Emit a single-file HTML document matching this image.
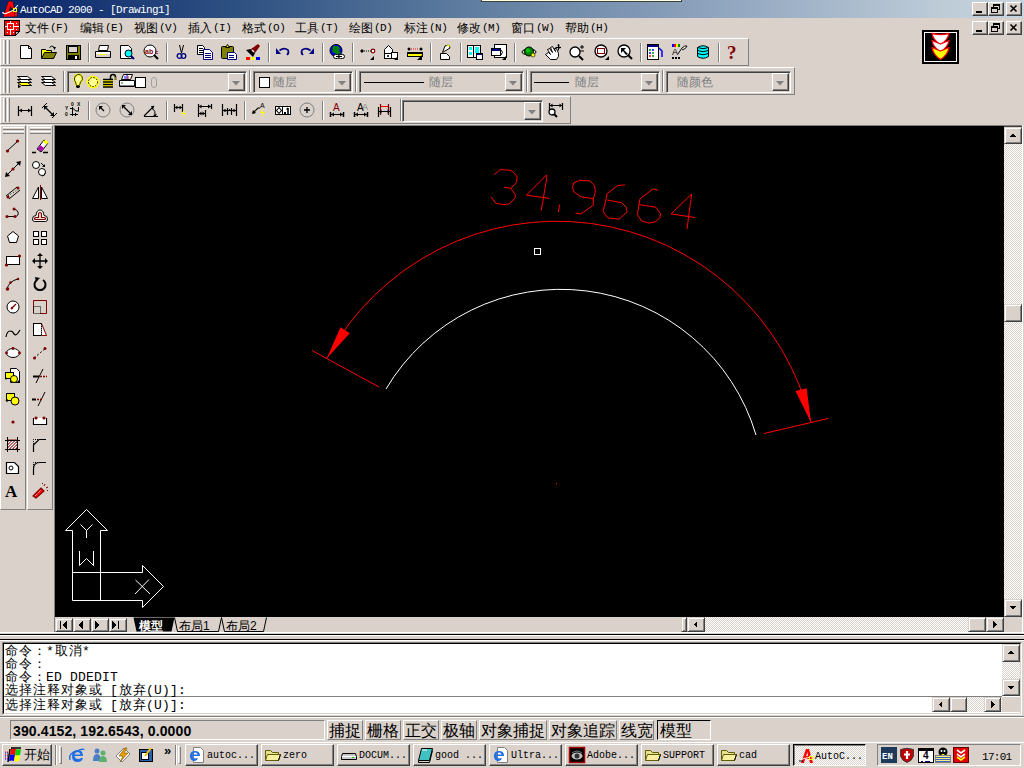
<!DOCTYPE html>
<html><head><meta charset="utf-8">
<style>
*{box-sizing:border-box}
body{margin:0;width:1024px;height:768px;overflow:hidden;background:#D9D1CA;position:relative;font-family:"Liberation Sans",sans-serif;font-size:12px;color:#000}
.a{position:absolute}
.t{position:absolute;white-space:nowrap;line-height:1}
.btn{position:absolute;background:#D9D1CA;border-top:1px solid #fff;border-left:1px solid #fff;border-right:1px solid #404040;border-bottom:1px solid #404040;box-shadow:inset -1px -1px #808080}
.sbtn{position:absolute;background:#D9D1CA;border-top:1px solid #D9D1CA;border-left:1px solid #D9D1CA;border-right:1px solid #404040;border-bottom:1px solid #404040;box-shadow:inset 1px 1px #fff,inset -1px -1px #808080}
.tb{position:absolute;border-top:1px solid #fff;border-left:1px solid #fff;border-right:1px solid #808080;border-bottom:1px solid #808080}
.chk{background-color:#fff;background-image:repeating-conic-gradient(#D9D1CA 0 25%,#fff 0 50%);background-size:2px 2px}
svg{position:absolute;overflow:visible}
</style></head><body>
<div class="a" style="left:0px;top:0px;width:1024px;height:18px;background:linear-gradient(to right,#0A246A 0px,#2D5082 235px,#5F7DA0 470px,#8FA4BE 715px,#BECCD8 945px,#C8D4DE 1024px)"></div>
<div class="a" style="left:481px;top:0px;width:201px;height:2px;background:#FFFFE1;border-left:1px solid #404040;border-right:1px solid #404040;border-bottom:1px solid #404040"></div>
<svg width="18" height="18" style="left:1px;top:0px" ><path d="M2.5,16.5 L7.5,1.5 H11.5 L13.5,9 L10.5,9 L9.5,5.5 L8,11 H11 L11.5,12 V16.5 H13.5 V12 L16,16.5" fill="#f00" stroke="#000" stroke-width="0.7"/><path d="M2.5,16.5 L7.5,1.5 H11.5 L13,8 H10 L9.5,5.5 L7.5,12 L6.5,16.5 Z" fill="#f00"/><rect x="11" y="12" width="2.5" height="4.5" fill="#f00"/><rect x="14" y="12" width="2" height="4" fill="#f00"/><path d="M1.5,12 Q2,14 5,13.5 L12,10.5 L17,5" fill="none" stroke="#fff" stroke-width="1.1"/><rect x="12.5" y="8.5" width="3" height="3" fill="none" stroke="#ff0"/></svg>
<div class="t" style="left:20px;top:5px;color:#fff;font-family:'Liberation Mono',monospace;font-size:11px;letter-spacing:-0.6px">AutoCAD 2000 - [Drawing1]</div>
<div class="btn" style="left:972px;top:2px;width:16px;height:14px;"></div>
<div class="btn" style="left:988px;top:2px;width:16px;height:14px;"></div>
<div class="btn" style="left:1006px;top:2px;width:16px;height:14px;"></div>
<svg width="16" height="14" style="left:972px;top:2px" shape-rendering="crispEdges"><rect x="4" y="9" width="6" height="2" fill="#000"/></svg>
<svg width="16" height="14" style="left:988px;top:2px" shape-rendering="crispEdges"><g fill="none" stroke="#000"><rect x="5.5" y="2.5" width="6" height="5"/><rect x="3.5" y="5.5" width="6" height="5" fill="#D9D1CA"/></g><rect x="5" y="2" width="7" height="2" fill="#000"/><rect x="3" y="5" width="7" height="2" fill="#000"/></svg>
<svg width="16" height="14" style="left:1006px;top:2px" ><path d="M4.5,3.5 L10.5,9.5 M10.5,3.5 L4.5,9.5" stroke="#000" stroke-width="1.6"/></svg>
<svg width="16" height="16" style="left:4px;top:20px" shape-rendering="crispEdges"><path d="M0.5,0.5 H15.5 V11.5 L11.5,15.5 H0.5 Z" fill="#f00" stroke="#000"/><path d="M6.5,1 V15 M1,6.5 H15" stroke="#fff"/><rect x="3.5" y="3.5" width="6" height="6" fill="#f00" stroke="#fff" stroke-width="1.3"/><rect x="6" y="6" width="1" height="1" fill="#fff"/><rect x="12" y="3" width="1" height="1" fill="#fff"/><rect x="12" y="9" width="1" height="1" fill="#fff"/><rect x="3" y="12" width="1" height="1" fill="#fff"/><rect x="9" y="12" width="1" height="1" fill="#fff"/><path d="M11.5,15.5 L15.5,11.5 H11.5 Z" fill="#c0c0c0" stroke="#000"/></svg>
<div class="t" style="left:25px;top:22px;font-size:12px">文件</div>
<div class="t" style="left:50px;top:23px;font-family:'Liberation Mono',monospace;font-size:11px;letter-spacing:-0.5px">(F)</div>
<div class="t" style="left:80px;top:22px;font-size:12px">编辑</div>
<div class="t" style="left:105px;top:23px;font-family:'Liberation Mono',monospace;font-size:11px;letter-spacing:-0.5px">(E)</div>
<div class="t" style="left:134px;top:22px;font-size:12px">视图</div>
<div class="t" style="left:159px;top:23px;font-family:'Liberation Mono',monospace;font-size:11px;letter-spacing:-0.5px">(V)</div>
<div class="t" style="left:188px;top:22px;font-size:12px">插入</div>
<div class="t" style="left:213px;top:23px;font-family:'Liberation Mono',monospace;font-size:11px;letter-spacing:-0.5px">(I)</div>
<div class="t" style="left:242px;top:22px;font-size:12px">格式</div>
<div class="t" style="left:267px;top:23px;font-family:'Liberation Mono',monospace;font-size:11px;letter-spacing:-0.5px">(O)</div>
<div class="t" style="left:295px;top:22px;font-size:12px">工具</div>
<div class="t" style="left:320px;top:23px;font-family:'Liberation Mono',monospace;font-size:11px;letter-spacing:-0.5px">(T)</div>
<div class="t" style="left:349px;top:22px;font-size:12px">绘图</div>
<div class="t" style="left:374px;top:23px;font-family:'Liberation Mono',monospace;font-size:11px;letter-spacing:-0.5px">(D)</div>
<div class="t" style="left:404px;top:22px;font-size:12px">标注</div>
<div class="t" style="left:429px;top:23px;font-family:'Liberation Mono',monospace;font-size:11px;letter-spacing:-0.5px">(N)</div>
<div class="t" style="left:457px;top:22px;font-size:12px">修改</div>
<div class="t" style="left:482px;top:23px;font-family:'Liberation Mono',monospace;font-size:11px;letter-spacing:-0.5px">(M)</div>
<div class="t" style="left:511px;top:22px;font-size:12px">窗口</div>
<div class="t" style="left:536px;top:23px;font-family:'Liberation Mono',monospace;font-size:11px;letter-spacing:-0.5px">(W)</div>
<div class="t" style="left:565px;top:22px;font-size:12px">帮助</div>
<div class="t" style="left:590px;top:23px;font-family:'Liberation Mono',monospace;font-size:11px;letter-spacing:-0.5px">(H)</div>
<div class="btn" style="left:972px;top:21px;width:16px;height:14px;"></div>
<div class="btn" style="left:988px;top:21px;width:16px;height:14px;"></div>
<div class="btn" style="left:1006px;top:21px;width:16px;height:14px;"></div>
<svg width="16" height="14" style="left:972px;top:21px" shape-rendering="crispEdges"><rect x="4" y="9" width="6" height="2" fill="#000"/></svg>
<svg width="16" height="14" style="left:988px;top:21px" shape-rendering="crispEdges"><g fill="none" stroke="#000"><rect x="5.5" y="2.5" width="6" height="5"/><rect x="3.5" y="5.5" width="6" height="5" fill="#D9D1CA"/></g><rect x="5" y="2" width="7" height="2" fill="#000"/><rect x="3" y="5" width="7" height="2" fill="#000"/></svg>
<svg width="16" height="14" style="left:1006px;top:21px" ><path d="M4.5,3.5 L10.5,9.5 M10.5,3.5 L4.5,9.5" stroke="#000" stroke-width="1.6"/></svg>
<div class="a" style="left:922px;top:30px;width:37px;height:34px;background:#000;border:2px solid #000;box-shadow:inset 0 0 0 1px #fff"></div>
<svg width="37" height="34" style="left:922px;top:30px" ><g stroke="#f00" stroke-width="1.3" stroke-linejoin="round"><path d="M10,3.5 Q18.5,5.5 27,3.5 Q26,10 18.5,14.5 Q11,10 10,3.5 Z" fill="#fff"/><path d="M10,10.5 L18.5,14 L27,10.5 Q26,17 18.5,22 Q11,17 10,10.5 Z" fill="#fff"/><path d="M10,17.5 L18.5,21 L27,17.5 Q26,24.5 18.5,29.5 Q11,24.5 10,17.5 Z" fill="#ff0"/></g></svg>
<div class="a" style="left:0px;top:38px;width:749px;height:28px;border-top:1px solid #fff;border-left:1px solid #fff;border-right:1px solid #808080;border-bottom:1px solid #808080"></div>
<div class="a" style="left:3px;top:40px;width:3px;height:24px;border-left:1px solid #fff;border-right:1px solid #808080;background:#D9D1CA"></div>
<div class="a" style="left:7px;top:40px;width:3px;height:24px;border-left:1px solid #fff;border-right:1px solid #808080;background:#D9D1CA"></div>
<svg width="16" height="16" style="left:18px;top:44px" ><path d="M2.5,1.5 H10.5 L13.5,4.5 V14.5 H2.5 Z" fill="#fff" stroke="#000"/><path d="M10.5,1.5 V4.5 H13.5" fill="none" stroke="#000"/></svg>
<svg width="16" height="16" style="left:41px;top:44px" ><path d="M0.5,5.5 H4.5 L5.5,6.5 H10.5 V8.5 H14.5 L12.5,14.5 H0.5 Z" fill="#ff0" stroke="#000"/><path d="M3.5,8.5 H15.5 L12.5,14.5 H0.5 Z" fill="#808000" stroke="#000"/><path d="M8.5,3.5 Q10.5,0.5 13.5,3.5" fill="none" stroke="#000"/><path d="M12,3 H15 L13.5,6 Z" fill="#000"/></svg>
<svg width="16" height="16" style="left:65px;top:44px" ><rect x="1.5" y="1.5" width="14" height="14" fill="#808000" stroke="#000"/><rect x="3.5" y="2.5" width="9" height="6" fill="#D9D1CA" stroke="#000"/><rect x="3" y="11" width="11" height="4" fill="#000"/><rect x="10" y="12" width="2" height="3" fill="#fff"/></svg>
<svg width="16" height="16" style="left:95px;top:44px" ><path d="M4.5,1.5 H13.5 L12.5,6.5 H3.5 Z" fill="#fff" stroke="#000"/><path d="M0.5,7.5 H15.5 V13.5 H0.5 Z" fill="#D9D1CA" stroke="#000"/><rect x="1" y="8" width="14" height="2" fill="#fff"/><rect x="4" y="10" width="7" height="1" fill="#ff0"/><path d="M1.5,13.5 H14.5" stroke="#000"/></svg>
<svg width="16" height="16" style="left:119px;top:44px" ><path d="M1.5,1.5 H9.5 L12.5,4.5 V14.5 H1.5 Z" fill="#fff" stroke="#000"/><circle cx="9.5" cy="9.5" r="3.5" fill="#0ff" stroke="#000"/><path d="M12,12 L15,15" stroke="#000080" stroke-width="2"/></svg>
<svg width="16" height="16" style="left:143px;top:44px" ><circle cx="7" cy="7" r="6" fill="#fff" stroke="#000"/><text x="2" y="10" font-family="Liberation Sans" font-weight="bold" font-size="7" fill="#800000">ab</text><text x="12" y="10" font-family="Liberation Sans" font-weight="bold" font-size="6" fill="#800000">c</text><path d="M11,11 L15,15" stroke="#000" stroke-width="2"/></svg>
<svg width="16" height="16" style="left:173px;top:44px" ><path d="M6.5,1 L8.5,9 M10.5,1 L8.5,9" stroke="#000"/><circle cx="6.5" cy="12" r="2.3" fill="none" stroke="#000080" stroke-width="1.3"/><circle cx="10.5" cy="12" r="2.3" fill="none" stroke="#000080" stroke-width="1.3"/></svg>
<svg width="16" height="16" style="left:197px;top:44px" ><path d="M0.5,1.5 H5.5 L7.5,3.5 V10.5 H0.5 Z" fill="#fff" stroke="#000"/><path d="M2,4.5 H6 M2,6.5 H6 M2,8.5 H6" stroke="#000"/><path d="M6.5,5.5 H12.5 L15.5,8.5 V15.5 H6.5 Z" fill="#fff" stroke="#000080"/><path d="M8,9.5 H14 M8,11.5 H14 M8,13.5 H14" stroke="#000080"/></svg>
<svg width="16" height="16" style="left:221px;top:44px" ><rect x="0.5" y="2.5" width="12" height="12" rx="1" fill="#808000" stroke="#000"/><path d="M4.5,3.5 L6.5,0.5 L8.5,3.5 Z" fill="#ff0" stroke="#000"/><path d="M6.5,8.5 H13.5 L15.5,10.5 V15.5 H6.5 Z" fill="#fff" stroke="#000080"/><path d="M8,11.5 H13 M8,13.5 H13" stroke="#000080"/></svg>
<svg width="16" height="16" style="left:245px;top:44px" ><path d="M1,6 L6,5 L10,9 L8,13 Z" fill="#000"/><path d="M6,5 L13,0 L15,2 L10,9 Z" fill="#800000"/><path d="M7,6 L9,8" stroke="#fff" stroke-width="1.5"/><rect x="1" y="13" width="4" height="3" fill="#f00"/><rect x="6" y="13" width="4" height="3" fill="#ff0"/><rect x="11" y="13" width="4" height="3" fill="#00f"/></svg>
<svg width="16" height="16" style="left:275px;top:44px" ><path d="M4.5,6.5 Q9,3 13,6 Q14.5,9 12,11" fill="none" stroke="#000080" stroke-width="1.6"/><path d="M1,4 L6,10 L1,10 Z" fill="#000080"/></svg>
<svg width="16" height="16" style="left:299px;top:44px" ><path d="M11.5,6.5 Q7,3 3,6 Q1.5,9 4,11" fill="none" stroke="#000080" stroke-width="1.6"/><path d="M15,4 L10,10 L15,10 Z" fill="#000080"/></svg>
<svg width="16" height="16" style="left:329px;top:44px" ><circle cx="7" cy="6.5" r="6" fill="#00f" stroke="#000"/><path d="M4,2 Q9,1 11,4 Q9,7 12,9 L8,11 Q6,8 3,8 Z" fill="#008000"/><rect x="4.5" y="10.5" width="6" height="4" rx="2" fill="#fff" stroke="#000"/><rect x="9.5" y="10.5" width="6" height="4" rx="2" fill="#fff" stroke="#000"/><path d="M7,12.5 H13" stroke="#000"/></svg>
<svg width="16" height="16" style="left:359px;top:44px" ><path d="M1,7 L3,5 L5,7 L3,9 Z" fill="#000"/><path d="M5,7 H12" stroke="#000" stroke-dasharray="1 1"/><circle cx="14" cy="7" r="1.8" fill="#fff" stroke="#800000" stroke-width="1.2"/><path d="M15,12 V16 H11 Z" fill="#000"/></svg>
<svg width="16" height="16" style="left:383px;top:44px" ><path d="M1.5,5.5 L5.5,1.5 L9.5,5.5 V9.5 H1.5 Z" fill="#fff" stroke="#000"/><rect x="1.5" y="9.5" width="7" height="5" fill="#fff" stroke="#000"/><rect x="8.5" y="8.5" width="6" height="6" fill="#fff" stroke="#000"/><path d="M4,12 H6 M5,11 V13" stroke="#000"/><path d="M15,12 V16 H11 Z" fill="#000"/></svg>
<svg width="16" height="16" style="left:407px;top:44px" ><circle cx="2" cy="5" r="1.5" fill="#000"/><circle cx="14" cy="5" r="1.5" fill="#000"/><path d="M4,5 H12" stroke="#f00" stroke-dasharray="1 1"/><rect x="0.5" y="8.5" width="15" height="4" fill="#ff0" stroke="#000"/><path d="M0.5,9.5 H15" stroke="#000"/><path d="M15,11 V16 H10 Z" fill="#000"/></svg>
<svg width="16" height="16" style="left:437px;top:44px" ><path d="M5.5,8.5 L8,2 L12,1 L13,4 Z" fill="#fff" stroke="#000"/><path d="M9,1 L12,0.5 L13,3 Z" fill="#ff0"/><path d="M3.5,9.5 H9.5 L12.5,12.5 V15.5 H3.5 Z" fill="#fff" stroke="#000"/></svg>
<svg width="16" height="16" style="left:467px;top:44px" ><rect x="0.5" y="1.5" width="13" height="12" fill="#fff" stroke="#000"/><path d="M6.5,1.5 V13.5" stroke="#000"/><rect x="2" y="3" width="3" height="3" fill="#0ff"/><rect x="2" y="8" width="3" height="3" fill="#0ff"/><rect x="8" y="3" width="4" height="6" fill="#0ff"/><rect x="9.5" y="9.5" width="6" height="6" fill="#fff" stroke="#000"/><rect x="10" y="10" width="5" height="1" fill="#000080"/></svg>
<svg width="16" height="16" style="left:491px;top:44px" ><rect x="3.5" y="0.5" width="12" height="13" fill="#fff" stroke="#000"/><rect x="0.5" y="4.5" width="9" height="7" fill="#fff" stroke="#000"/><rect x="1" y="5" width="8" height="2" fill="#000080"/><path d="M10,6 Q13,8 10,11" fill="none" stroke="#000"/><path d="M15,12 V16 H11 Z" fill="#000"/></svg>
<svg width="16" height="16" style="left:521px;top:44px" ><ellipse cx="8" cy="8" rx="7" ry="3" fill="none" stroke="#000"/><circle cx="8" cy="7.5" r="4.5" fill="#008000" stroke="#000"/><circle cx="7" cy="6.5" r="2" fill="#0c0"/><circle cx="12" cy="11" r="2" fill="#ff0" stroke="#000" stroke-width="0.6"/></svg>
<svg width="16" height="16" style="left:545px;top:44px" ><path d="M0.5,10.5 L3.5,8.5 L5.5,10.5 L2.5,5.5 L4.5,4.5 L7.5,8.5 L5.5,3.5 L7.5,2.5 L10.5,7.5 L9.5,4.5 L11.5,4.5 L13.5,9.5 L13.5,12.5 L11.5,15.5 L5.5,15.5 Z" fill="#fff" stroke="#000"/><path d="M10.5,3.5 H16 M13.5,0.5 V6.5" stroke="#000"/><path d="M13.5,0 L12,1.5 H15 Z M16,3.5 L14.5,2 V5 Z" fill="#000"/></svg>
<svg width="16" height="16" style="left:569px;top:44px" ><circle cx="6" cy="8" r="5" fill="#fff" stroke="#000" stroke-width="1.3"/><path d="M10,12 L14,16" stroke="#000" stroke-width="2"/><path d="M11,3 H15 M13,1 V5 M11,7 H15" stroke="#000"/></svg>
<svg width="16" height="16" style="left:594px;top:44px" ><circle cx="7" cy="7" r="6" fill="#fff" stroke="#000" stroke-width="1.3"/><rect x="3.5" y="4.5" width="7" height="5" fill="none" stroke="#800000"/><path d="M15,12 V16 H11 Z" fill="#000"/></svg>
<svg width="16" height="16" style="left:617px;top:44px" ><circle cx="7" cy="7" r="6" fill="#fff" stroke="#000" stroke-width="1.3"/><path d="M4,4 L9,4 L7,6 L11,10 L9,11 L6,7 L4,9 Z" fill="#000"/><path d="M11,11 L15,15" stroke="#000" stroke-width="2"/></svg>
<svg width="16" height="16" style="left:647px;top:44px" ><rect x="0.5" y="0.5" width="11" height="15" fill="#fff" stroke="#000"/><rect x="1" y="1" width="10" height="2" fill="#000080"/><circle cx="3" cy="6" r="1" fill="#008000"/><circle cx="6" cy="6" r="1" fill="#00f"/><circle cx="3" cy="9" r="1" fill="#00f"/><circle cx="6" cy="9" r="1" fill="#008000"/><circle cx="3" cy="12" r="1" fill="#f00"/><circle cx="6" cy="12" r="1" fill="#008000"/><path d="M12,4 L15,7 V13" stroke="#00f" stroke-width="1.5" fill="none"/></svg>
<svg width="16" height="16" style="left:671px;top:44px" ><rect x="1" y="0" width="2" height="3" fill="#00f"/><rect x="3" y="0" width="2" height="3" fill="#f00"/><rect x="5" y="0" width="2" height="3" fill="#ff0"/><rect x="7" y="0" width="2" height="3" fill="#008000"/><text x="1" y="11" font-family="Liberation Sans" font-size="9" fill="#000">A</text><rect x="1" y="13" width="2" height="2" fill="#000"/><rect x="4" y="13" width="2" height="2" fill="#000"/><rect x="7" y="13" width="2" height="2" fill="#000"/><path d="M7,10 L11,4 Q14,1 16,2 Q15,5 11,6" fill="#fff" stroke="#000"/></svg>
<svg width="16" height="16" style="left:695px;top:44px" ><path d="M2.5,3.5 Q8,0 13.5,3.5 V12.5 Q8,16 2.5,12.5 Z" fill="#0ff" stroke="#000"/><path d="M2.5,6.5 Q8,9 13.5,6.5 M2.5,9.5 Q8,12 13.5,9.5 M2.5,3.5 Q8,6 13.5,3.5" fill="none" stroke="#000"/></svg>
<svg width="16" height="16" style="left:725px;top:44px" ><text x="2" y="15" font-family="Liberation Serif" font-weight="bold" font-size="19" fill="#800000">?</text></svg>
<div class="a" style="left:88px;top:43px;width:1px;height:19px;background:#808080"></div>
<div class="a" style="left:89px;top:43px;width:1px;height:19px;background:#fff"></div>
<div class="a" style="left:166px;top:43px;width:1px;height:19px;background:#808080"></div>
<div class="a" style="left:167px;top:43px;width:1px;height:19px;background:#fff"></div>
<div class="a" style="left:268px;top:43px;width:1px;height:19px;background:#808080"></div>
<div class="a" style="left:269px;top:43px;width:1px;height:19px;background:#fff"></div>
<div class="a" style="left:322px;top:43px;width:1px;height:19px;background:#808080"></div>
<div class="a" style="left:323px;top:43px;width:1px;height:19px;background:#fff"></div>
<div class="a" style="left:352px;top:43px;width:1px;height:19px;background:#808080"></div>
<div class="a" style="left:353px;top:43px;width:1px;height:19px;background:#fff"></div>
<div class="a" style="left:430px;top:43px;width:1px;height:19px;background:#808080"></div>
<div class="a" style="left:431px;top:43px;width:1px;height:19px;background:#fff"></div>
<div class="a" style="left:460px;top:43px;width:1px;height:19px;background:#808080"></div>
<div class="a" style="left:461px;top:43px;width:1px;height:19px;background:#fff"></div>
<div class="a" style="left:514px;top:43px;width:1px;height:19px;background:#808080"></div>
<div class="a" style="left:515px;top:43px;width:1px;height:19px;background:#fff"></div>
<div class="a" style="left:640px;top:43px;width:1px;height:19px;background:#808080"></div>
<div class="a" style="left:641px;top:43px;width:1px;height:19px;background:#fff"></div>
<div class="a" style="left:718px;top:43px;width:1px;height:19px;background:#808080"></div>
<div class="a" style="left:719px;top:43px;width:1px;height:19px;background:#fff"></div>
<div class="a" style="left:0px;top:67px;width:795px;height:28px;border-top:1px solid #fff;border-left:1px solid #fff;border-right:1px solid #808080;border-bottom:1px solid #808080"></div>
<div class="a" style="left:3px;top:69px;width:3px;height:24px;border-left:1px solid #fff;border-right:1px solid #808080;background:#D9D1CA"></div>
<div class="a" style="left:7px;top:69px;width:3px;height:24px;border-left:1px solid #fff;border-right:1px solid #808080;background:#D9D1CA"></div>
<svg width="16" height="16" style="left:17px;top:73px" ><path d="M0.5,3.5 H10.5 L14.5,6.5 H4.5 Z" fill="#fff" stroke="#000"/><path d="M0.5,6.5 H10.5 L14.5,9.5 H4.5 Z" fill="#fff" stroke="#000"/><path d="M0.5,9.5 H10.5 L14.5,12.5 H4.5 Z" fill="#ff0" stroke="#000"/><path d="M1,15 L1,11 L4,14 Z" fill="#000"/></svg>
<svg width="16" height="16" style="left:41px;top:73px" ><path d="M0.5,3.5 H10.5 L14.5,6.5 H4.5 Z" fill="#fff" stroke="#000"/><path d="M0.5,6.5 H10.5 L14.5,9.5 H4.5 Z" fill="#fff" stroke="#000"/><path d="M0.5,9.5 H10.5 L14.5,12.5 H4.5 Z" fill="#fff" stroke="#000"/></svg>
<div class="a" style="left:63px;top:71px;width:1px;height:21px;background:#808080"></div>
<div class="a" style="left:64px;top:71px;width:1px;height:21px;background:#fff"></div>
<div class="a" style="left:67px;top:71px;width:180px;height:22px;border-top:1px solid #808080;border-left:1px solid #808080;border-right:1px solid #fff;border-bottom:1px solid #fff;box-shadow:inset 1px 1px #404040,inset -1px -1px #D9D1CA;"></div>
<div class="btn" style="left:228px;top:73px;width:17px;height:18px;"></div>
<svg width="8" height="5" style="left:232px;top:81px" ><path d="M0,0 H8 L4,4.5 Z" fill="#808080"/></svg>
<svg width="16" height="16" style="left:72px;top:74px" ><path d="M2.5,5 A4,4 0 1 1 8.5,8 L7.5,11.5 H4.5 L3.5,8 A4,4 0 0 1 2.5,5 Z" fill="#ffffa0" stroke="#ff0" stroke-width="2"/><path d="M2.5,5 A4,4 0 1 1 8.5,8 L7.5,11.5 H4.5 L3.5,8 A4,4 0 0 1 2.5,5 Z" fill="none" stroke="#000" stroke-width="0.8"/><path d="M4,12 H8 V13 L7,14 H5 L4,13 Z" fill="#000"/></svg>
<svg width="16" height="16" style="left:86px;top:74px" ><circle cx="7" cy="8" r="5.5" fill="#ffff90" stroke="#ff0" stroke-width="2"/><circle cx="7" cy="8" r="4.5" fill="none" stroke="#000" stroke-dasharray="1.5 1.5"/></svg>
<svg width="16" height="16" style="left:103px;top:73px" ><path d="M7.5,7 V4 Q7.5,1.5 10,1.5 Q12.5,1.5 12.5,4 V7" fill="none" stroke="#000" stroke-width="1.5"/><path d="M12.5,4 V7" stroke="#808000" stroke-width="1.5"/><rect x="0" y="6" width="10" height="8" fill="#ff0"/><path d="M0,6.5 H10 M0,9 H10 M0,11.5 H10 M0,14 H10" stroke="#000" stroke-width="1.3"/></svg>
<svg width="16" height="16" style="left:119px;top:74px" ><path d="M4.5,0.5 H13.5 L11.5,5.5 H2.5 Z" fill="#fff" stroke="#000"/><path d="M6,2 V5 M8,1 V5" stroke="#00f"/><path d="M9,2 V5" stroke="#f00"/><path d="M0.5,6.5 H15.5 V12.5 H0.5 Z" fill="#fff" stroke="#000"/><path d="M2,9 H4" stroke="#008000"/><path d="M1,11.5 H15" stroke="#808080"/></svg>
<svg width="12" height="12" style="left:135px;top:77px" shape-rendering="crispEdges"><rect x="0.5" y="0.5" width="10" height="10" fill="#fff" stroke="#000"/></svg>
<svg width="8" height="12" style="left:151px;top:77px" ><rect x="0.5" y="0.5" width="5" height="10" rx="2.5" fill="none" stroke="#a0a0a0"/></svg>
<div class="a" style="left:249px;top:70px;width:1px;height:22px;background:#808080"></div>
<div class="a" style="left:250px;top:70px;width:1px;height:22px;background:#fff"></div>
<div class="a" style="left:253px;top:71px;width:100px;height:22px;border-top:1px solid #808080;border-left:1px solid #808080;border-right:1px solid #fff;border-bottom:1px solid #fff;box-shadow:inset 1px 1px #404040,inset -1px -1px #D9D1CA;"></div>
<div class="btn" style="left:334px;top:73px;width:17px;height:18px;"></div>
<svg width="8" height="5" style="left:338px;top:81px" ><path d="M0,0 H8 L4,4.5 Z" fill="#808080"/></svg>
<svg width="12" height="12" style="left:259px;top:77px" shape-rendering="crispEdges"><rect x="0.5" y="0.5" width="10" height="10" fill="#fff" stroke="#000"/></svg>
<div class="t" style="left:273px;top:76px;color:#808080;font-size:12px">随层</div>
<div class="a" style="left:355px;top:70px;width:1px;height:22px;background:#808080"></div>
<div class="a" style="left:356px;top:70px;width:1px;height:22px;background:#fff"></div>
<div class="a" style="left:359px;top:71px;width:165px;height:22px;border-top:1px solid #808080;border-left:1px solid #808080;border-right:1px solid #fff;border-bottom:1px solid #fff;box-shadow:inset 1px 1px #404040,inset -1px -1px #D9D1CA;"></div>
<div class="btn" style="left:505px;top:73px;width:17px;height:18px;"></div>
<svg width="8" height="5" style="left:509px;top:81px" ><path d="M0,0 H8 L4,4.5 Z" fill="#808080"/></svg>
<div class="a" style="left:364px;top:82px;width:60px;height:1px;background:#000"></div>
<div class="t" style="left:429px;top:76px;color:#808080;font-size:12px">随层</div>
<div class="a" style="left:526px;top:70px;width:1px;height:22px;background:#808080"></div>
<div class="a" style="left:527px;top:70px;width:1px;height:22px;background:#fff"></div>
<div class="a" style="left:530px;top:71px;width:130px;height:22px;border-top:1px solid #808080;border-left:1px solid #808080;border-right:1px solid #fff;border-bottom:1px solid #fff;box-shadow:inset 1px 1px #404040,inset -1px -1px #D9D1CA;"></div>
<div class="btn" style="left:641px;top:73px;width:17px;height:18px;"></div>
<svg width="8" height="5" style="left:645px;top:81px" ><path d="M0,0 H8 L4,4.5 Z" fill="#808080"/></svg>
<div class="a" style="left:534px;top:82px;width:35px;height:1px;background:#000"></div>
<div class="t" style="left:575px;top:76px;color:#808080;font-size:12px">随层</div>
<div class="a" style="left:662px;top:70px;width:1px;height:22px;background:#808080"></div>
<div class="a" style="left:663px;top:70px;width:1px;height:22px;background:#fff"></div>
<div class="a" style="left:666px;top:71px;width:125px;height:22px;border-top:1px solid #808080;border-left:1px solid #808080;border-right:1px solid #fff;border-bottom:1px solid #fff;box-shadow:inset 1px 1px #404040,inset -1px -1px #D9D1CA;"></div>
<div class="btn" style="left:772px;top:73px;width:17px;height:18px;"></div>
<svg width="8" height="5" style="left:776px;top:81px" ><path d="M0,0 H8 L4,4.5 Z" fill="#808080"/></svg>
<div class="t" style="left:677px;top:76px;color:#808080;font-size:12px">随颜色</div>
<div class="a" style="left:0px;top:96px;width:571px;height:28px;border-top:1px solid #fff;border-left:1px solid #fff;border-right:1px solid #808080;border-bottom:1px solid #808080"></div>
<div class="a" style="left:3px;top:98px;width:3px;height:24px;border-left:1px solid #fff;border-right:1px solid #808080;background:#D9D1CA"></div>
<div class="a" style="left:7px;top:98px;width:3px;height:24px;border-left:1px solid #fff;border-right:1px solid #808080;background:#D9D1CA"></div>
<svg width="16" height="16" style="left:16px;top:102px" ><path d="M2.5,4 V14 M15.5,4 V14" stroke="#000" stroke-width="1.2"/><path d="M3,8.5 H15" stroke="#000"/><path d="M3,8.5 L6,6.5 V10.5 Z M15,8.5 L12,6.5 V10.5 Z" fill="#000"/></svg>
<svg width="16" height="16" style="left:41px;top:102px" ><path d="M1,6 L6,1 M11,16 L16,11" stroke="#000"/><path d="M4,5 L12,13" stroke="#000" stroke-width="1.3"/><path d="M3,4 L7,4 L3,8 Z M13,14 L9,14 L13,10 Z" fill="#000"/></svg>
<svg width="16" height="16" style="left:65px;top:102px" ><text x="0" y="8" font-family="Liberation Sans" font-weight="bold" font-size="5" fill="#000">Y</text><text x="0" y="14" font-family="Liberation Sans" font-weight="bold" font-size="5" fill="#000">0</text><text x="6" y="4" font-family="Liberation Sans" font-weight="bold" font-size="5" fill="#000">0</text><text x="12" y="4" font-family="Liberation Sans" font-weight="bold" font-size="5" fill="#000">X</text><path d="M5,6.5 H8 M5,12.5 H13 M7.5,5 V14 M10.5,11 V14 M8,6.5 L11,9 H14 M13.5,5 V9" stroke="#000" fill="none"/></svg>
<svg width="16" height="16" style="left:95px;top:102px" ><circle cx="8" cy="8" r="7" fill="none" stroke="#808080"/><path d="M5,5 L9,9" stroke="#000" stroke-width="1.3"/><path d="M4,4 H8 L4,8 Z" fill="#000"/></svg>
<svg width="16" height="16" style="left:119px;top:102px" ><circle cx="8" cy="8" r="7" fill="none" stroke="#808080"/><path d="M5,5 L11,11" stroke="#000" stroke-width="1.3"/><path d="M3,3 H7 L3,7 Z M13,13 H9 L13,9 Z" fill="#000"/></svg>
<svg width="16" height="16" style="left:143px;top:102px" ><path d="M1,14.5 H15 M1,14 L11,4" stroke="#000" stroke-width="1.2"/><path d="M9,6 Q13,9 12,13" fill="none" stroke="#000"/><path d="M8,4 L11,4 L10,8 Z M10,13 L14,12 L12,15 Z" fill="#000"/></svg>
<svg width="16" height="16" style="left:173px;top:102px" ><path d="M1.5,2 V10 M9.5,2 V10" stroke="#000" stroke-width="1.2"/><path d="M2,5.5 H9" stroke="#000"/><path d="M2,5.5 L4.5,3.5 V7.5 Z M9,5.5 L6.5,3.5 V7.5 Z" fill="#000"/><path d="M11,8 L8,12 H11 L9,16 L13,11 H10 L12,8 Z" fill="#ff0"/></svg>
<svg width="16" height="16" style="left:197px;top:102px" ><path d="M1.5,2 V15 M8.5,8 V15 M14.5,2 V7" stroke="#000" stroke-width="1.2"/><path d="M2,4.5 H14 M2,11.5 H8" stroke="#000"/><path d="M14,4.5 L11,2.5 V6.5 Z M2,4.5 L4.5,2.5 V6.5 Z M2,11.5 L4.5,9.5 V13.5 Z M8,11.5 L5.5,9.5 V13.5 Z" fill="#000"/></svg>
<svg width="16" height="16" style="left:221px;top:102px" ><path d="M1.5,2 V14 M6.5,6 V13 M10.5,6 V13 M15.5,2 V14" stroke="#000" stroke-width="1.2"/><path d="M2,8.5 H15" stroke="#000"/><path d="M2,8.5 L4,7 V10 Z M6,8.5 L4,7 V10 Z M7,8.5 L9,7 V10 Z M10,8.5 L8,7 V10 Z M11,8.5 L13,7 V10 Z M15,8.5 L13,7 V10 Z" fill="#000"/></svg>
<svg width="16" height="16" style="left:251px;top:102px" ><path d="M2,11 L7,6 H9" stroke="#000" stroke-width="1.2" fill="none"/><path d="M1,12 L2,8 L5,11 Z" fill="#000"/><text x="9" y="6" font-family="Liberation Sans" font-size="7" fill="#000">A</text><path d="M12,7 L9,11 H12 L10,16 L14,10 H11 L13,7 Z" fill="#ff0"/></svg>
<svg width="16" height="16" style="left:275px;top:102px" ><rect x="0.5" y="4.5" width="15" height="8" fill="#fff" stroke="#000"/><path d="M7.5,4.5 V12.5" stroke="#000"/><path d="M4,5.5 L6.5,8.5 L4,11.5 L1.5,8.5 Z" fill="none" stroke="#000" stroke-width="1.1"/><rect x="9" y="10" width="2" height="2" fill="#000"/><path d="M13,6 V12" stroke="#000" stroke-width="1.6"/><path d="M11.5,7.5 L13,6" stroke="#000" stroke-width="1.2"/></svg>
<svg width="16" height="16" style="left:299px;top:102px" ><circle cx="8" cy="8" r="7" fill="none" stroke="#808080"/><path d="M5,8 H11 M8,5 V11" stroke="#000" stroke-width="1.3"/></svg>
<svg width="16" height="16" style="left:329px;top:102px" ><text x="4" y="9" font-family="Liberation Sans" font-size="10" fill="#800000">A</text><path d="M1.5,10 V15 M14.5,10 V15" stroke="#000" stroke-width="1.5"/><path d="M2,12.5 H14" stroke="#000"/><path d="M2,12.5 L5,10.5 V14.5 Z M14,12.5 L11,10.5 V14.5 Z" fill="#000"/></svg>
<svg width="16" height="16" style="left:353px;top:102px" ><text x="9" y="8" font-family="Liberation Sans" font-size="9" fill="#808080">A</text><text x="4" y="9" font-family="Liberation Sans" font-size="10" fill="#000">A</text><path d="M1.5,10 V15 M14.5,10 V15" stroke="#000" stroke-width="1.5"/><path d="M2,12.5 H14" stroke="#000"/><path d="M2,12.5 L5,10.5 V14.5 Z M14,12.5 L11,10.5 V14.5 Z" fill="#000"/></svg>
<svg width="16" height="16" style="left:377px;top:102px" ><path d="M3.5,2 V13 M11.5,2 V13" stroke="#800000" stroke-width="1.2"/><path d="M4,4.5 H11" stroke="#f00"/><path d="M1.5,5 V15 M13.5,5 V15" stroke="#000" stroke-width="1.2"/><path d="M2,9.5 H13" stroke="#000"/><path d="M2,9.5 L4.5,7.5 V11.5 Z M13,9.5 L10.5,7.5 V11.5 Z" fill="#000"/></svg>
<div class="a" style="left:88px;top:101px;width:1px;height:19px;background:#808080"></div>
<div class="a" style="left:89px;top:101px;width:1px;height:19px;background:#fff"></div>
<div class="a" style="left:166px;top:101px;width:1px;height:19px;background:#808080"></div>
<div class="a" style="left:167px;top:101px;width:1px;height:19px;background:#fff"></div>
<div class="a" style="left:244px;top:101px;width:1px;height:19px;background:#808080"></div>
<div class="a" style="left:245px;top:101px;width:1px;height:19px;background:#fff"></div>
<div class="a" style="left:322px;top:101px;width:1px;height:19px;background:#808080"></div>
<div class="a" style="left:323px;top:101px;width:1px;height:19px;background:#fff"></div>
<div class="a" style="left:400px;top:99px;width:1px;height:22px;background:#808080"></div>
<div class="a" style="left:401px;top:99px;width:1px;height:22px;background:#fff"></div>
<div class="a" style="left:402px;top:100px;width:141px;height:22px;border-top:1px solid #808080;border-left:1px solid #808080;border-right:1px solid #fff;border-bottom:1px solid #fff;box-shadow:inset 1px 1px #404040,inset -1px -1px #D9D1CA;"></div>
<div class="btn" style="left:524px;top:102px;width:17px;height:18px;"></div>
<svg width="8" height="5" style="left:528px;top:110px" ><path d="M0,0 H8 L4,4.5 Z" fill="#808080"/></svg>
<svg width="16" height="16" style="left:547px;top:102px" ><path d="M2.5,1 V8 M15.5,1 V8" stroke="#000" stroke-width="1.2"/><path d="M3,3.5 H15" stroke="#000"/><path d="M3,3.5 L5.5,1.5 V5.5 Z M15,3.5 L12.5,1.5 V5.5 Z" fill="#000"/><circle cx="5" cy="10" r="3" fill="#fff" stroke="#000" stroke-width="1.3"/><path d="M7,12 L10,15" stroke="#000" stroke-width="2"/></svg>
<div class="a" style="left:0px;top:125px;width:26px;height:385px;border-top:1px solid #fff;border-left:1px solid #fff;border-right:1px solid #808080;border-bottom:1px solid #808080"></div>
<div class="a" style="left:3px;top:127px;width:21px;height:3px;border-top:1px solid #fff;border-bottom:1px solid #808080"></div>
<div class="a" style="left:3px;top:131px;width:21px;height:3px;border-top:1px solid #fff;border-bottom:1px solid #808080"></div>
<div class="a" style="left:27px;top:125px;width:26px;height:385px;border-top:1px solid #fff;border-left:1px solid #fff;border-right:1px solid #808080;border-bottom:1px solid #808080"></div>
<div class="a" style="left:30px;top:127px;width:21px;height:3px;border-top:1px solid #fff;border-bottom:1px solid #808080"></div>
<div class="a" style="left:30px;top:131px;width:21px;height:3px;border-top:1px solid #fff;border-bottom:1px solid #808080"></div>
<svg width="16" height="16" style="left:5px;top:138px" ><path d="M2,13 L13,3" stroke="#000"/><circle cx="2.5" cy="13" r="1.6" fill="#800000"/><circle cx="12.5" cy="3" r="1.6" fill="#800000"/></svg>
<svg width="16" height="16" style="left:5px;top:161px" ><path d="M1,15 L15,1" stroke="#000"/><path d="M0,16 L1,11 L5,15 Z M16,0 L11,1 L15,5 Z" fill="#000"/><circle cx="8" cy="8" r="1.6" fill="#800000"/></svg>
<svg width="16" height="16" style="left:5px;top:184px" ><path d="M1,12 L12,3 M4,15 L15,6" stroke="#000"/><path d="M3,12 L12,6" stroke="#000" stroke-dasharray="1 2"/><circle cx="3" cy="13" r="1.5" fill="#800000"/><circle cx="13" cy="4" r="1.5" fill="#800000"/></svg>
<svg width="16" height="16" style="left:5px;top:207px" ><path d="M2,9.5 H10 Q14,9 13,5 Q12,2 8,2" fill="none" stroke="#000"/><circle cx="2" cy="9.5" r="1.5" fill="#800000"/><circle cx="10" cy="9.5" r="1.5" fill="#800000"/><circle cx="9" cy="2" r="1.5" fill="#800000"/></svg>
<svg width="16" height="16" style="left:5px;top:230px" ><path d="M8,1.5 L13.5,6 L11.5,12.5 H4.5 L2.5,6 Z" fill="#fff" stroke="#000"/></svg>
<svg width="16" height="16" style="left:5px;top:253px" ><rect x="1.5" y="3.5" width="13" height="8" fill="#fff" stroke="#000"/><circle cx="1.5" cy="12" r="1.6" fill="#800000"/><circle cx="14.5" cy="3" r="1.6" fill="#800000"/></svg>
<svg width="16" height="16" style="left:5px;top:276px" ><path d="M2,13 Q4,5 13,3" fill="none" stroke="#000"/><circle cx="2.5" cy="13" r="1.8" fill="#800000"/><circle cx="5.5" cy="6.5" r="1.3" fill="#800000"/><circle cx="13" cy="3" r="1.3" fill="#800000"/></svg>
<svg width="16" height="16" style="left:5px;top:299px" ><circle cx="8" cy="8" r="6" fill="#fff" stroke="#000"/><path d="M6,10 L11,5" stroke="#800000" stroke-width="1.2"/><circle cx="7" cy="9" r="1.2" fill="#800000"/></svg>
<svg width="16" height="16" style="left:5px;top:322px" ><path d="M1,15 Q2,9 5,9 Q8,9 9,12 Q11,14 13,11 L15,8" fill="none" stroke="#000" stroke-width="1.2"/></svg>
<svg width="16" height="16" style="left:5px;top:345px" ><ellipse cx="8" cy="8" rx="6.5" ry="4.5" fill="#fff" stroke="#000"/><circle cx="1.5" cy="8" r="1.4" fill="#800000"/><circle cx="14.5" cy="8" r="1.4" fill="#800000"/><circle cx="8" cy="3.5" r="1.4" fill="#800000"/></svg>
<svg width="16" height="16" style="left:5px;top:368px" ><path d="M5.5,0.5 H11.5 L14.5,3.5 V14.5 H5.5 Z" fill="#fff" stroke="#000"/><rect x="0.5" y="4.5" width="8" height="6" fill="#ff0" stroke="#000"/><circle cx="9" cy="11" r="3.5" fill="#ff0" stroke="#000"/><path d="M15,11 V15 H11 Z" fill="#000"/><circle cx="1" cy="10.5" r="1" fill="#000"/></svg>
<svg width="16" height="16" style="left:5px;top:391px" ><rect x="1.5" y="2.5" width="8" height="7" fill="#ff0" stroke="#000"/><circle cx="10" cy="10" r="4" fill="#ff0" stroke="#000"/><circle cx="2" cy="9.5" r="1.2" fill="#000"/></svg>
<svg width="16" height="16" style="left:5px;top:414px" ><circle cx="8" cy="8" r="1.6" fill="#800000"/></svg>
<svg width="16" height="16" style="left:5px;top:437px" ><rect x="2.5" y="2.5" width="10" height="10" fill="#800000"/><path d="M3,6 L6,3 M3,9 L9,3 M3,12 L12,3 M6,12 L12,6 M9,12 L12,9" stroke="#fff" stroke-width="1.3"/><path d="M0,3.5 H15 M0,12.5 H15 M2.5,0 V15 M12.5,0 V15" stroke="#000"/></svg>
<svg width="16" height="16" style="left:5px;top:460px" ><path d="M1.5,2.5 H9.5 L13.5,6.5 V13.5 H1.5 Z" fill="#fff" stroke="#000" stroke-width="1.2"/><circle cx="6" cy="8" r="2" fill="none" stroke="#000"/></svg>
<svg width="16" height="16" style="left:5px;top:483px" ><text x="0" y="14" font-family="Liberation Serif" font-weight="bold" font-size="17" fill="#000">A</text></svg>
<svg width="16" height="16" style="left:32px;top:138px" ><path d="M5,11 L12,2 L16,5 L9,14 Z" fill="#fff" stroke="#000" stroke-width="1"/><path d="M5.5,11 L8.5,7.2 L12.3,10.3 L9,13.5 Z" fill="#b000b0"/><path d="M10.8,3.6 L12,2.2 L15.6,5 L14.3,6.6 Z" fill="#ff0"/><path d="M13,2.5 L15.8,5" stroke="#ff0" stroke-width="2"/><path d="M0,14.5 H4 M11,14.5 H16" stroke="#000" stroke-width="1.6"/></svg>
<svg width="16" height="16" style="left:32px;top:161px" ><circle cx="4" cy="4" r="3.5" fill="#fff" stroke="#000"/><circle cx="10" cy="11" r="3.5" fill="#fff" stroke="#000"/><path d="M13,12 A3,3 0 0 1 10,15" fill="#fff" stroke="#000"/><path d="M9,2 L12,5" stroke="#000"/><path d="M13,6 L10,6 L13,3 Z" fill="#000"/></svg>
<svg width="16" height="16" style="left:32px;top:184px" ><path d="M6.5,3 V14.5 H0.5 Z" fill="#fff" stroke="#000"/><path d="M9.5,3 V14.5 H15.5 Z" fill="#fff" stroke="#000"/><path d="M8.5,1 V16" stroke="#800000" stroke-width="1"/></svg>
<svg width="16" height="16" style="left:32px;top:207px" ><path d="M2.5,14.5 Q0.5,14.5 0.5,12 Q0.5,8.5 4,8.5 Q4.5,3 8,3 Q11.5,3 12,8.5 Q15.5,8.5 15.5,12 Q15.5,14.5 13.5,14.5 Z" fill="#fff" stroke="#000"/><path d="M3.5,12.5 Q2.5,12.5 2.5,11.5 Q2.5,10.5 4,10.5 H6.5 V6.5 Q8,4.5 9.5,6.5 V10.5 H12 Q13.5,10.5 13.5,11.5 Q13.5,12.5 12.5,12.5 Z" fill="#e8e0d0" stroke="#800000" stroke-width="1.2"/></svg>
<svg width="16" height="16" style="left:32px;top:230px" ><rect x="1.5" y="1.5" width="5" height="5" fill="#fff" stroke="#000"/><rect x="9.5" y="1.5" width="5" height="5" fill="#fff" stroke="#000"/><rect x="1.5" y="9.5" width="5" height="5" fill="#fff" stroke="#000"/><rect x="9.5" y="9.5" width="5" height="5" fill="#fff" stroke="#000"/></svg>
<svg width="16" height="16" style="left:32px;top:253px" ><path d="M8,2 V14 M2,8 H14" stroke="#000" stroke-width="1.3"/><path d="M8,0 L11,3 H5 Z M8,16 L11,13 H5 Z M0,8 L3,5 V11 Z M16,8 L13,5 V11 Z" fill="#000"/></svg>
<svg width="16" height="16" style="left:32px;top:276px" ><path d="M5,4 A5.5,5.5 0 1 0 11,4" fill="none" stroke="#000" stroke-width="2"/><path d="M3,1 L8,2 L4,6 Z" fill="#000"/></svg>
<svg width="16" height="16" style="left:32px;top:299px" ><path d="M1.5,14 V1.5 H14.5 V14.5 H8" fill="none" stroke="#800000"/><path d="M1.5,7.5 H8.5 V14.5 H1.5 Z" fill="none" stroke="#000" stroke-dasharray="1 1"/></svg>
<svg width="16" height="16" style="left:32px;top:322px" ><rect x="1.5" y="1.5" width="8" height="12" fill="#fff" stroke="#000"/><path d="M9.5,1.5 L14.5,13.5 H9.5" fill="#fff" stroke="#800000"/><path d="M9.5,2 V13" stroke="#000" stroke-dasharray="1 1"/></svg>
<svg width="16" height="16" style="left:32px;top:345px" ><path d="M2,13 L14,3" stroke="#000" stroke-dasharray="2 2"/><circle cx="2.5" cy="13" r="1.5" fill="#800000"/><circle cx="13" cy="3.5" r="1.5" fill="#800000"/></svg>
<svg width="16" height="16" style="left:32px;top:368px" ><path d="M4,15 L11,1" stroke="#000"/><path d="M1,8.5 H7" stroke="#000" stroke-width="2"/><path d="M8,8.5 H15" stroke="#800000" stroke-width="1.5" stroke-dasharray="2 1"/></svg>
<svg width="16" height="16" style="left:32px;top:391px" ><path d="M6,15 L13,1" stroke="#000"/><path d="M0,8.5 H4" stroke="#000" stroke-width="2"/><path d="M5,8.5 H10" stroke="#800000" stroke-width="1.5" stroke-dasharray="2 1"/></svg>
<svg width="16" height="16" style="left:32px;top:414px" ><path d="M1.5,4 V10.5 H14.5 V4" fill="#fff" stroke="#000" stroke-width="1.2"/><rect x="2" y="5" width="12" height="5" fill="#fff"/><circle cx="4" cy="4" r="1.6" fill="#800000"/><circle cx="12" cy="4" r="1.6" fill="#800000"/></svg>
<svg width="16" height="16" style="left:32px;top:437px" ><path d="M1.5,15 V8 L7,2.5 H14" fill="none" stroke="#000" stroke-width="1.2"/><path d="M1.5,7 V2.5 H6" fill="none" stroke="#000" stroke-dasharray="1 1"/></svg>
<svg width="16" height="16" style="left:32px;top:460px" ><path d="M1.5,15 V9 Q1.5,2.5 8,2.5 H14" fill="none" stroke="#000" stroke-width="1.2"/><path d="M1.5,7 V2.5 H6" fill="none" stroke="#000" stroke-dasharray="1 1"/></svg>
<svg width="16" height="16" style="left:32px;top:483px" ><path d="M1,13 L9,5 L12,8 L4,15 Z" fill="#f00" stroke="#800000" stroke-width="1.2"/><path d="M3,13 L9,7" stroke="#fff" stroke-dasharray="1 1"/><path d="M12,3 L13,1 M14,5 L16,4 M11,1 L10,0 M15,7 L16,8" stroke="#800000"/></svg>
<div class="a" style="left:54px;top:125px;width:969px;height:508px;border-top:1px solid #808080;border-left:1px solid #808080;box-shadow:inset 1px 1px #404040"></div>
<div class="a" style="left:55px;top:126px;width:949px;height:491px;background:#000"></div>
<svg width="1024" height="768" style="left:0;top:0">
<g fill="none" stroke="#f00" stroke-width="1">
<polyline points="494.4,174.5 499.5,170.2 501.4,169.4 503.75,169.8 510,170.2 512.3,171.4 514.3,173.3 517,176.8 516.6,182.3 515.5,183.9 510.8,187.8"/>
<polyline points="504.1,187.4 510.8,188.2 512.3,190.5 515.5,194.8 514.7,198.7 509.2,203.8 503.75,204.6 495.9,203.4 491.25,197.2"/>
<polyline points="549.1,198.3 526.4,195.2 546.7,174.9 546.7,178.4 541.25,210.4"/>
<polyline points="559.6,204.6 558.4,212"/>
<polyline points="593.3,198.7 580.8,196.8 574.2,192.1 572.3,187.5 573.6,182.9 579.5,180.3 590,180.9 594.7,185.5 595.3,192.1 593.3,198.7 593.3,205.3 580.8,213.9 575.5,213.2"/>
<polyline points="625,184.9 617.7,185.5 607.2,193.5 605.9,200 603.2,210.6 604.6,213.9 607.8,217.8 619,219.2 627,211.9 626.3,207.3 621.7,202.7 607.2,200"/>
<polyline points="658,190.2 653.3,188.8 640.1,198.7 638.8,205.3 637.5,214.6 641.5,221.1 649.4,223.1 655.3,221.8 659.9,217.8 660.6,213.9 656,207.3 644.1,205.3 638.8,204.7"/>
<polyline points="694.9,217.5 671.1,213.9 691.6,194.1 690.9,199.4 687,229"/>
<path d="M327,358 A261.3,261.3 0 0 1 811,422.4"/>
<path d="M312,350.5 L379,387"/><path d="M764,433.5 L828,418.5"/>
</g>
<g fill="#f00"><polygon points="327,358 340.5,327.3 349.8,333.2"/><polygon points="811,422.4 795.5,391.1 806.7,388.2"/><rect x="556" y="483" width="1" height="1"/></g>
<path fill="none" stroke="#fff" d="M386,389 A203.4,203.4 0 0 1 756,435"/>
<rect x="534.5" y="248.5" width="6" height="6" fill="none" stroke="#fff"/>
<g fill="none" stroke="#fff" stroke-width="1"><polyline points="72.5,600.5 72.5,530.5 65.5,530.5 86.5,509.5 107.5,530.5 100.5,530.5 100.5,600.5"/><polyline points="72.5,572.5 142.5,572.5 142.5,565.5 163.5,586.5 142.5,607.5 142.5,600.5 72.5,600.5"/><polyline points="80.5,524.5 86.5,530.5 92.5,524.5"/><line x1="86.5" y1="530.5" x2="86.5" y2="538"/><polyline points="79.5,551 79.5,565.5 86.5,558.5 93.5,565.5 93.5,551"/><line x1="135.5" y1="580" x2="150" y2="594"/><line x1="149" y1="579.5" x2="135" y2="594"/></g></svg>
<div class="a" style="left:1004px;top:127px;width:18px;height:490px;background-color:#fff;background-image:repeating-conic-gradient(#D9D1CA 0 25%,#fff 0 50%);background-size:2px 2px"></div>
<div class="sbtn" style="left:1004px;top:127px;width:18px;height:17px;"></div>
<svg width="18" height="17" style="left:1004px;top:127px" shape-rendering="crispEdges"><path d="M5,10 H12 L8.5,6.5 Z" fill="#000"/></svg>
<div class="sbtn" style="left:1004px;top:304px;width:18px;height:18px;"></div>
<div class="sbtn" style="left:1004px;top:599px;width:18px;height:18px;"></div>
<svg width="18" height="18" style="left:1004px;top:599px" shape-rendering="crispEdges"><path d="M5,7 H12 L8.5,10.5 Z" fill="#000"/></svg>
<div class="a" style="left:1022px;top:125px;width:1px;height:509px;background:#fff"></div>
<div class="a" style="left:55px;top:617px;width:967px;height:15px;background:#D9D1CA"></div>
<div class="sbtn" style="left:55px;top:618px;width:18px;height:14px;"></div>
<div class="sbtn" style="left:73px;top:618px;width:18px;height:14px;"></div>
<div class="sbtn" style="left:91px;top:618px;width:18px;height:14px;"></div>
<div class="sbtn" style="left:109px;top:618px;width:18px;height:14px;"></div>
<svg width="72" height="14" style="left:55px;top:618px" shape-rendering="crispEdges"><path d="M5.5,3 V11" stroke="#000"/><path d="M12,3 L7,7 L12,11 Z" fill="#000"/><path d="M28,3 L23,7 L28,11 Z" fill="#000"/><path d="M40,3 L45,7 L40,11 Z" fill="#000"/><path d="M57,3 L62,7 L57,11 Z" fill="#000"/><path d="M63.5,3 V11" stroke="#000"/></svg>
<svg width="140" height="16" style="left:128px;top:617px" ><path d="M132,0 L135,14.5 H171 L174,0" transform="translate(-128,0)" fill="none"/><path d="M5.5,0.5 L8.5,14.5 H43.5 L46.5,0.5 Z" fill="#000"/><path d="M46.5,0.5 L49.5,14.5 H90.5 L93.5,0.5" fill="#D9D1CA" stroke="#000"/><path d="M93.5,0.5 L96.5,14.5 H135.5 L138.5,0.5" fill="#D9D1CA" stroke="#000"/></svg>
<div class="t" style="left:139px;top:620px;color:#fff;font-size:12px"><b>模型</b></div>
<div class="t" style="left:179px;top:620px;font-size:12px">布局1</div>
<div class="t" style="left:226px;top:620px;font-size:12px">布局2</div>
<div class="a" style="left:705px;top:617px;width:263px;height:15px;background-color:#fff;background-image:repeating-conic-gradient(#D9D1CA 0 25%,#fff 0 50%);background-size:2px 2px"></div>
<div class="sbtn" style="left:681px;top:617px;width:6px;height:15px;"></div>
<div class="sbtn" style="left:687px;top:617px;width:18px;height:15px;"></div>
<svg width="18" height="15" style="left:687px;top:617px" shape-rendering="crispEdges"><path d="M10,4 V11 L6.5,7.5 Z" fill="#000"/></svg>
<div class="sbtn" style="left:968px;top:617px;width:18px;height:15px;"></div>
<div class="sbtn" style="left:986px;top:617px;width:18px;height:15px;"></div>
<svg width="18" height="15" style="left:986px;top:617px" shape-rendering="crispEdges"><path d="M7,4 V11 L10.5,7.5 Z" fill="#000"/></svg>
<div class="a" style="left:0px;top:632px;width:1024px;height:1px;background:#fff"></div>
<div class="a" style="left:0px;top:634px;width:1024px;height:1px;background:#000"></div>
<div class="a" style="left:0px;top:635px;width:1024px;height:1px;background:#fff"></div>
<div class="a" style="left:0px;top:639px;width:1024px;height:1px;background:#000"></div>
<div class="a" style="left:0px;top:640px;width:1024px;height:1px;background:#fff"></div>
<div class="a" style="left:2px;top:642px;width:1020px;height:73px;border-top:1px solid #808080;border-left:1px solid #808080;border-right:1px solid #fff;border-bottom:1px solid #fff"></div>
<div class="a" style="left:3px;top:643px;width:1018px;height:71px;border-top:1px solid #000;border-left:1px solid #000;border-right:1px solid #D9D1CA;border-bottom:1px solid #D9D1CA;background:#fff"></div>
<div class="a" style="left:4px;top:696px;width:998px;height:1px;background:#808080"></div>
<div class="t" style="left:4px;top:645px;"><span style="display:inline-block;width:14px;text-align:center;font-size:12.5px">命</span><span style="display:inline-block;width:14px;text-align:center;font-size:12.5px">令</span><span style="display:inline-block;width:14px;text-align:center;font-size:12.5px">：</span><span style="display:inline-block;width:8px;text-align:center;font-size:13px;font-family:'Liberation Mono',monospace">*</span><span style="display:inline-block;width:14px;text-align:center;font-size:12.5px">取</span><span style="display:inline-block;width:14px;text-align:center;font-size:12.5px">消</span><span style="display:inline-block;width:8px;text-align:center;font-size:13px;font-family:'Liberation Mono',monospace">*</span></div>
<div class="t" style="left:4px;top:658px;"><span style="display:inline-block;width:14px;text-align:center;font-size:12.5px">命</span><span style="display:inline-block;width:14px;text-align:center;font-size:12.5px">令</span><span style="display:inline-block;width:14px;text-align:center;font-size:12.5px">：</span></div>
<div class="t" style="left:4px;top:671px;"><span style="display:inline-block;width:14px;text-align:center;font-size:12.5px">命</span><span style="display:inline-block;width:14px;text-align:center;font-size:12.5px">令</span><span style="display:inline-block;width:14px;text-align:center;font-size:12.5px">：</span><span style="display:inline-block;width:8px;text-align:center;font-size:13px;font-family:'Liberation Mono',monospace">E</span><span style="display:inline-block;width:8px;text-align:center;font-size:13px;font-family:'Liberation Mono',monospace">D</span><span style="display:inline-block;width:8px;text-align:center;font-size:13px;font-family:'Liberation Mono',monospace">&nbsp;</span><span style="display:inline-block;width:8px;text-align:center;font-size:13px;font-family:'Liberation Mono',monospace">D</span><span style="display:inline-block;width:8px;text-align:center;font-size:13px;font-family:'Liberation Mono',monospace">D</span><span style="display:inline-block;width:8px;text-align:center;font-size:13px;font-family:'Liberation Mono',monospace">E</span><span style="display:inline-block;width:8px;text-align:center;font-size:13px;font-family:'Liberation Mono',monospace">D</span><span style="display:inline-block;width:8px;text-align:center;font-size:13px;font-family:'Liberation Mono',monospace">I</span><span style="display:inline-block;width:8px;text-align:center;font-size:13px;font-family:'Liberation Mono',monospace">T</span></div>
<div class="t" style="left:4px;top:684px;"><span style="display:inline-block;width:14px;text-align:center;font-size:12.5px">选</span><span style="display:inline-block;width:14px;text-align:center;font-size:12.5px">择</span><span style="display:inline-block;width:14px;text-align:center;font-size:12.5px">注</span><span style="display:inline-block;width:14px;text-align:center;font-size:12.5px">释</span><span style="display:inline-block;width:14px;text-align:center;font-size:12.5px">对</span><span style="display:inline-block;width:14px;text-align:center;font-size:12.5px">象</span><span style="display:inline-block;width:14px;text-align:center;font-size:12.5px">或</span><span style="display:inline-block;width:8px;text-align:center;font-size:13px;font-family:'Liberation Mono',monospace">&nbsp;</span><span style="display:inline-block;width:8px;text-align:center;font-size:13px;font-family:'Liberation Mono',monospace">[</span><span style="display:inline-block;width:14px;text-align:center;font-size:12.5px">放</span><span style="display:inline-block;width:14px;text-align:center;font-size:12.5px">弃</span><span style="display:inline-block;width:8px;text-align:center;font-size:13px;font-family:'Liberation Mono',monospace">(</span><span style="display:inline-block;width:8px;text-align:center;font-size:13px;font-family:'Liberation Mono',monospace">U</span><span style="display:inline-block;width:8px;text-align:center;font-size:13px;font-family:'Liberation Mono',monospace">)</span><span style="display:inline-block;width:8px;text-align:center;font-size:13px;font-family:'Liberation Mono',monospace">]</span><span style="display:inline-block;width:8px;text-align:center;font-size:13px;font-family:'Liberation Mono',monospace">:</span></div>
<div class="t" style="left:4px;top:699px;"><span style="display:inline-block;width:14px;text-align:center;font-size:12.5px">选</span><span style="display:inline-block;width:14px;text-align:center;font-size:12.5px">择</span><span style="display:inline-block;width:14px;text-align:center;font-size:12.5px">注</span><span style="display:inline-block;width:14px;text-align:center;font-size:12.5px">释</span><span style="display:inline-block;width:14px;text-align:center;font-size:12.5px">对</span><span style="display:inline-block;width:14px;text-align:center;font-size:12.5px">象</span><span style="display:inline-block;width:14px;text-align:center;font-size:12.5px">或</span><span style="display:inline-block;width:8px;text-align:center;font-size:13px;font-family:'Liberation Mono',monospace">&nbsp;</span><span style="display:inline-block;width:8px;text-align:center;font-size:13px;font-family:'Liberation Mono',monospace">[</span><span style="display:inline-block;width:14px;text-align:center;font-size:12.5px">放</span><span style="display:inline-block;width:14px;text-align:center;font-size:12.5px">弃</span><span style="display:inline-block;width:8px;text-align:center;font-size:13px;font-family:'Liberation Mono',monospace">(</span><span style="display:inline-block;width:8px;text-align:center;font-size:13px;font-family:'Liberation Mono',monospace">U</span><span style="display:inline-block;width:8px;text-align:center;font-size:13px;font-family:'Liberation Mono',monospace">)</span><span style="display:inline-block;width:8px;text-align:center;font-size:13px;font-family:'Liberation Mono',monospace">]</span><span style="display:inline-block;width:8px;text-align:center;font-size:13px;font-family:'Liberation Mono',monospace">:</span></div>
<div class="a" style="left:1002px;top:644px;width:18px;height:52px;background-color:#fff;background-image:repeating-conic-gradient(#D9D1CA 0 25%,#fff 0 50%);background-size:2px 2px"></div>
<div class="sbtn" style="left:1002px;top:644px;width:18px;height:18px;"></div>
<svg width="18" height="18" style="left:1002px;top:644px" shape-rendering="crispEdges"><path d="M5,10 H12 L8.5,6.5 Z" fill="#000"/></svg>
<div class="sbtn" style="left:1002px;top:679px;width:18px;height:17px;"></div>
<svg width="18" height="17" style="left:1002px;top:679px" shape-rendering="crispEdges"><path d="M5,7 H12 L8.5,10.5 Z" fill="#000"/></svg>
<div class="a" style="left:932px;top:697px;width:70px;height:15px;background-color:#fff;background-image:repeating-conic-gradient(#D9D1CA 0 25%,#fff 0 50%);background-size:2px 2px"></div>
<div class="sbtn" style="left:932px;top:697px;width:18px;height:15px;"></div>
<svg width="18" height="15" style="left:932px;top:697px" shape-rendering="crispEdges"><path d="M10,4 V11 L6.5,7.5 Z" fill="#000"/></svg>
<div class="sbtn" style="left:950px;top:697px;width:17px;height:15px;"></div>
<div class="sbtn" style="left:984px;top:697px;width:17px;height:15px;"></div>
<svg width="17" height="15" style="left:984px;top:697px" shape-rendering="crispEdges"><path d="M7,4 V11 L10.5,7.5 Z" fill="#000"/></svg>
<div class="a" style="left:1002px;top:697px;width:18px;height:15px;background:#D9D1CA"></div>
<div class="a" style="left:0px;top:716px;width:1024px;height:1px;background:#808080"></div>
<div class="a" style="left:0px;top:717px;width:1024px;height:1px;background:#fff"></div>
<div class="a" style="left:10px;top:720px;width:315px;height:20px;border-top:1px solid #808080;border-left:1px solid #808080;border-right:1px solid #fff;border-bottom:1px solid #fff;"></div>
<div class="t" style="left:13px;top:724px;font-weight:bold;font-size:14px;letter-spacing:0.12px">390.4152, 192.6543, 0.0000</div>
<div class="a" style="left:327px;top:720px;width:36px;height:20px;border-top:1px solid #fff;border-left:1px solid #fff;border-right:1px solid #808080;border-bottom:1px solid #808080"></div>
<div class="t" style="left:329px;top:723px;font-size:16px">捕捉</div>
<div class="a" style="left:365px;top:720px;width:36px;height:20px;border-top:1px solid #fff;border-left:1px solid #fff;border-right:1px solid #808080;border-bottom:1px solid #808080"></div>
<div class="t" style="left:367px;top:723px;font-size:16px">栅格</div>
<div class="a" style="left:403px;top:720px;width:36px;height:20px;border-top:1px solid #fff;border-left:1px solid #fff;border-right:1px solid #808080;border-bottom:1px solid #808080"></div>
<div class="t" style="left:405px;top:723px;font-size:16px">正交</div>
<div class="a" style="left:441px;top:720px;width:36px;height:20px;border-top:1px solid #fff;border-left:1px solid #fff;border-right:1px solid #808080;border-bottom:1px solid #808080"></div>
<div class="t" style="left:443px;top:723px;font-size:16px">极轴</div>
<div class="a" style="left:479px;top:720px;width:68px;height:20px;border-top:1px solid #fff;border-left:1px solid #fff;border-right:1px solid #808080;border-bottom:1px solid #808080"></div>
<div class="t" style="left:481px;top:723px;font-size:16px">对象捕捉</div>
<div class="a" style="left:549px;top:720px;width:68px;height:20px;border-top:1px solid #fff;border-left:1px solid #fff;border-right:1px solid #808080;border-bottom:1px solid #808080"></div>
<div class="t" style="left:551px;top:723px;font-size:16px">对象追踪</div>
<div class="a" style="left:619px;top:720px;width:35px;height:20px;border-top:1px solid #fff;border-left:1px solid #fff;border-right:1px solid #808080;border-bottom:1px solid #808080"></div>
<div class="t" style="left:621px;top:723px;font-size:16px">线宽</div>
<div class="a" style="left:657px;top:720px;width:54px;height:20px;border-top:1px solid #000;border-left:1px solid #000;border-right:1px solid #fff;border-bottom:1px solid #fff"></div>
<div class="t" style="left:660px;top:723px;font-size:16px">模型</div>
<div class="a" style="left:0px;top:741px;width:1024px;height:27px;background:#D9D1CA;border-top:1px solid #D9D1CA;box-shadow:inset 0 1px #fff"></div>
<div class="btn" style="left:2px;top:744px;width:50px;height:22px;"></div>
<svg width="16" height="16" style="left:5px;top:747px" ><path d="M6,2 Q9,1 11,2 L10,8 Q8,7 5,8 Z" fill="#f00"/><path d="M11,2 Q14,3 16,2 L15,8 Q13,9 10,8 Z" fill="#0c0"/><path d="M5,8 Q8,7 10,8 L9,14 Q7,13 4,14 Z" fill="#00f"/><path d="M10,8 Q13,9 15,8 L14,14 Q12,15 9,14 Z" fill="#ff0"/><path d="M5,2 L3,15 M6,1 L16,1" stroke="#000" stroke-width="1.5"/><path d="M0,5 H3 M0,8 H3 M0,11 H3" stroke="#f00" stroke-dasharray="1 1"/><path d="M0,6 H3 M0,9 H3 M0,12 H3" stroke="#00f" stroke-dasharray="1 1"/></svg>
<div class="t" style="left:24px;top:749px;font-size:12.5px">开始</div>
<div class="a" style="left:55px;top:745px;width:2px;height:20px;border-left:1px solid #808080;border-right:1px solid #fff"></div>
<div class="a" style="left:59px;top:746px;width:3px;height:18px;border-top:1px solid #fff;border-left:1px solid #fff;border-right:1px solid #808080;border-bottom:1px solid #808080"></div>
<svg width="16" height="16" style="left:69px;top:747px" ><path d="M3,9 Q3,3 8.5,3 Q14,3 14,9 H5.5 Q6,12 9,12 Q11,12 12,11 H14 Q13,15 8.5,15 Q3,15 3,9 Z M5.5,7.5 H11.5 Q11,5 8.5,5 Q6,5 5.5,7.5 Z" fill="#1e6ee6" fill-rule="evenodd"/><path d="M1,13 Q-1,6 8,4 Q15,1 15,3" fill="none" stroke="#1e6ee6" stroke-width="1.3"/></svg>
<svg width="16" height="16" style="left:92px;top:747px" ><circle cx="5" cy="4" r="2.5" fill="#4a7ec8"/><path d="M1,14 Q1,7 5,7 Q9,7 9,14 Z" fill="#4a7ec8"/><circle cx="11" cy="6" r="2.5" fill="#5ab06c"/><path d="M7,15 Q7,9 11,9 Q15,9 15,15 Z" fill="#5ab06c"/></svg>
<svg width="16" height="16" style="left:115px;top:747px" ><path d="M1,9 L9,1 L15,7 L7,15 Z" fill="#fff" stroke="#808080"/><path d="M10,1 L4,9 H8 L5,15 L13,6 H9 L12,1 Z" fill="#f0a000" stroke="#806000" stroke-width="0.7"/></svg>
<svg width="16" height="16" style="left:138px;top:747px" ><rect x="1.5" y="2.5" width="13" height="12" fill="#2860b0" stroke="#000"/><rect x="3.5" y="5.5" width="7" height="7" fill="#fff" stroke="#000"/><path d="M7,9 L13,1" stroke="#f0c000" stroke-width="2"/></svg>
<div class="t" style="left:164px;top:744px;font-size:13px;font-weight:bold">»</div>
<div class="a" style="left:175px;top:745px;width:2px;height:20px;border-left:1px solid #808080;border-right:1px solid #fff"></div>
<div class="a" style="left:178px;top:746px;width:3px;height:18px;border-top:1px solid #fff;border-left:1px solid #fff;border-right:1px solid #808080;border-bottom:1px solid #808080"></div>
<div class="btn" style="left:185px;top:744px;width:73px;height:22px;"></div>
<svg width="16" height="16" style="left:189px;top:747px" ><path d="M4.5,0.5 H11.5 L14.5,3.5 V15.5 H4.5 Z" fill="#fff" stroke="#808080"/><path d="M1,9 Q1,4 6,4 Q11,4 11,9 H3.5 Q4,11.5 6.5,11.5 L9,11 Q8,14 6,14 Q1,14 1,9 Z M3.5,7.5 H8.5 Q8,5.5 6,5.5 Q4,5.5 3.5,7.5 Z" fill="#1e6ee6" fill-rule="evenodd"/></svg>
<div class="t" style="left:207px;top:751px;font-family:'Liberation Mono',monospace;font-size:10px">autoc...</div>
<div class="btn" style="left:261px;top:744px;width:73px;height:22px;"></div>
<svg width="16" height="16" style="left:265px;top:747px" ><path d="M0.5,3.5 H5.5 L7.5,5.5 H13.5 V13.5 H0.5 Z" fill="#e8e090" stroke="#606000"/><path d="M2.5,7.5 H15.5 L13.5,13.5 H0.5 Z" fill="#f8f0a0" stroke="#606000"/><path d="M13.5,13.5 L15.5,7.5" stroke="#000"/></svg>
<div class="t" style="left:283px;top:751px;font-family:'Liberation Mono',monospace;font-size:10px">zero</div>
<div class="btn" style="left:337px;top:744px;width:73px;height:22px;"></div>
<svg width="16" height="16" style="left:341px;top:747px" ><path d="M1.5,6.5 H14.5 L15.5,9.5 V12.5 H0.5 V9.5 Z" fill="#c8c8c8" stroke="#000"/><path d="M1,9.5 H15" stroke="#fff"/><rect x="11" y="10" width="2" height="1" fill="#0c0"/></svg>
<div class="t" style="left:359px;top:751px;font-family:'Liberation Mono',monospace;font-size:10px">DOCUM...</div>
<div class="btn" style="left:413px;top:744px;width:73px;height:22px;"></div>
<svg width="16" height="16" style="left:417px;top:747px" ><path d="M4.5,1.5 H15.5 L12.5,13.5 H1.5 Z" fill="#40c0c0" stroke="#000"/><path d="M5,3 H10" stroke="#fff"/><path d="M1.5,13.5 V15.5 H12.5 L15.5,3.5" fill="none" stroke="#000"/></svg>
<div class="t" style="left:435px;top:751px;font-family:'Liberation Mono',monospace;font-size:10px">good ...</div>
<div class="btn" style="left:489px;top:744px;width:73px;height:22px;"></div>
<svg width="16" height="16" style="left:493px;top:747px" ><path d="M4.5,0.5 H11.5 L14.5,3.5 V15.5 H4.5 Z" fill="#fff" stroke="#808080"/><path d="M1,9 Q1,4 6,4 Q11,4 11,9 H3.5 Q4,11.5 6.5,11.5 L9,11 Q8,14 6,14 Q1,14 1,9 Z M3.5,7.5 H8.5 Q8,5.5 6,5.5 Q4,5.5 3.5,7.5 Z" fill="#1e6ee6" fill-rule="evenodd"/></svg>
<div class="t" style="left:511px;top:751px;font-family:'Liberation Mono',monospace;font-size:10px">Ultra...</div>
<div class="btn" style="left:565px;top:744px;width:73px;height:22px;"></div>
<svg width="16" height="16" style="left:569px;top:747px" ><rect x="0.5" y="0.5" width="15" height="15" fill="#000" stroke="#a00000" stroke-width="1.5"/><ellipse cx="8" cy="9" rx="5.5" ry="3.5" fill="#c0c0c0"/><circle cx="8" cy="9" r="2.5" fill="#303030"/><path d="M3,6 Q8,2 13,6" fill="none" stroke="#808080"/></svg>
<div class="t" style="left:587px;top:751px;font-family:'Liberation Mono',monospace;font-size:10px">Adobe...</div>
<div class="btn" style="left:641px;top:744px;width:73px;height:22px;"></div>
<svg width="16" height="16" style="left:645px;top:747px" ><path d="M0.5,3.5 H5.5 L7.5,5.5 H13.5 V13.5 H0.5 Z" fill="#e8e090" stroke="#606000"/><path d="M2.5,7.5 H15.5 L13.5,13.5 H0.5 Z" fill="#f8f0a0" stroke="#606000"/><path d="M13.5,13.5 L15.5,7.5" stroke="#000"/></svg>
<div class="t" style="left:663px;top:751px;font-family:'Liberation Mono',monospace;font-size:10px">SUPPORT</div>
<div class="btn" style="left:717px;top:744px;width:73px;height:22px;"></div>
<svg width="16" height="16" style="left:721px;top:747px" ><path d="M0.5,3.5 H5.5 L7.5,5.5 H13.5 V13.5 H0.5 Z" fill="#e8e090" stroke="#606000"/><path d="M2.5,7.5 H15.5 L13.5,13.5 H0.5 Z" fill="#f8f0a0" stroke="#606000"/><path d="M13.5,13.5 L15.5,7.5" stroke="#000"/></svg>
<div class="t" style="left:739px;top:751px;font-family:'Liberation Mono',monospace;font-size:10px">cad</div>
<div class="a" style="left:793px;top:744px;width:73px;height:22px;border-top:1px solid #000;border-left:1px solid #000;border-right:1px solid #fff;border-bottom:1px solid #fff;box-shadow:inset 1px 1px #808080;background-color:#fff;background-image:repeating-conic-gradient(#D9D1CA 0 25%,#fff 0 50%);background-size:2px 2px"></div>
<svg width="16" height="16" style="left:798px;top:748px" ><path d="M3,15 L8,1 L11,1 L15,15 L12,15 L11,11 L7,11 L6,15 Z M8,8 L10,8 L9.5,4 Z" fill="#f00" fill-rule="evenodd"/><path d="M1,13 Q5,10 11,9.5 L16,4" fill="none" stroke="#fff" stroke-width="1"/><rect x="11.5" y="8.5" width="3" height="3" fill="none" stroke="#ff0"/><path d="M1,13 H5" stroke="#000"/></svg>
<div class="t" style="left:815px;top:752px;font-family:'Liberation Mono',monospace;font-size:10px">AutoC...</div>
<div class="a" style="left:877px;top:744px;width:144px;height:22px;border-top:1px solid #808080;border-left:1px solid #808080;border-right:1px solid #fff;border-bottom:1px solid #fff;"></div>
<svg width="16" height="16" style="left:881px;top:747px" ><rect x="0" y="0" width="16" height="16" fill="#1e3a5a"/><text x="1" y="12" font-family="Liberation Mono" font-weight="bold" font-size="9" fill="#fff">EN</text></svg>
<svg width="16" height="16" style="left:899px;top:747px" ><path d="M1.5,2.5 Q8,0 14.5,2.5 V9 Q13,14 8,15.5 Q3,14 1.5,9 Z" fill="#c00000" stroke="#404040"/><path d="M8,4 V12 M5,7.5 H11" stroke="#fff" stroke-width="2.2"/></svg>
<svg width="16" height="16" style="left:918px;top:747px" ><rect x="0.5" y="1.5" width="15" height="14" fill="#fff" stroke="#000"/><rect x="1" y="2" width="14" height="2" fill="#000"/><text x="5" y="12" font-family="Liberation Sans" font-weight="bold" font-size="10" fill="#000">4</text><path d="M3,14.5 H5 M7,14.5 H12" stroke="#000080"/></svg>
<svg width="16" height="16" style="left:935px;top:747px" ><circle cx="8" cy="5" r="4.5" fill="#000"/><circle cx="6.5" cy="4" r="1" fill="#fff"/><circle cx="9.5" cy="4" r="1" fill="#fff"/><path d="M6,7 H10 L8,8.5 Z" fill="#ff0"/><rect x="0.5" y="8.5" width="15" height="7" fill="#f0f080" stroke="#808080"/><path d="M1,10.5 H15 M1,12.5 H15 M1,14.5 H15" stroke="#4060c0"/></svg>
<svg width="16" height="16" style="left:953px;top:747px" ><rect x="0" y="0" width="16" height="16" fill="#e00000"/><rect x="0.5" y="0.5" width="15" height="15" fill="none" stroke="#600000"/><path d="M4,3 L8,6 L12,3 M4,7 L8,10 L12,7" fill="none" stroke="#fff" stroke-width="1.6"/><path d="M4,10 L8,13 L12,10" fill="none" stroke="#ff0" stroke-width="1.6"/></svg>
<div class="t" style="left:982px;top:752px;font-family:'Liberation Mono',monospace;font-size:11px;letter-spacing:-0.7px">17:01</div>
</body></html>
